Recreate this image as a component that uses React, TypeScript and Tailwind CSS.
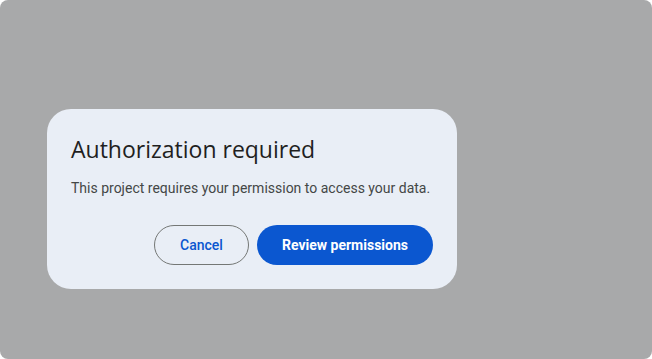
import React from "react";

export default function App() {
  return (
    <div className="w-[652px] h-[359px] bg-white">
      <div className="w-full h-full rounded-[8px] bg-[#a8a9aa] flex items-start pt-[109px] pl-[47px]" style={{ fontFamily: "Roboto, 'Open Sans', sans-serif" }}>
        <div className="w-[410px] rounded-[24px] bg-[#e9eef6] px-6 pt-6 pb-6">
          <div className="text-[23px] leading-[32px] text-[#1f1f1f]" style={{ fontFamily: "'Open Sans', Roboto, sans-serif" }}>
            Authorization required
          </div>
          <div className="mt-[13px] whitespace-nowrap text-[14px] leading-[20px] text-[#444746]">
            This project requires your permission to access your data.
          </div>
          <div className="mt-[27px] flex justify-end gap-2">
            <button className="h-10 w-[95px] rounded-full border border-[#747775] text-[14px] font-medium text-[#0b57d0]">
              Cancel
            </button>
            <button className="h-10 w-[176px] rounded-full bg-[#0b57d0] text-[14px] font-bold text-white">
              Review permissions
            </button>
          </div>
        </div>
      </div>
    </div>
  );
}
